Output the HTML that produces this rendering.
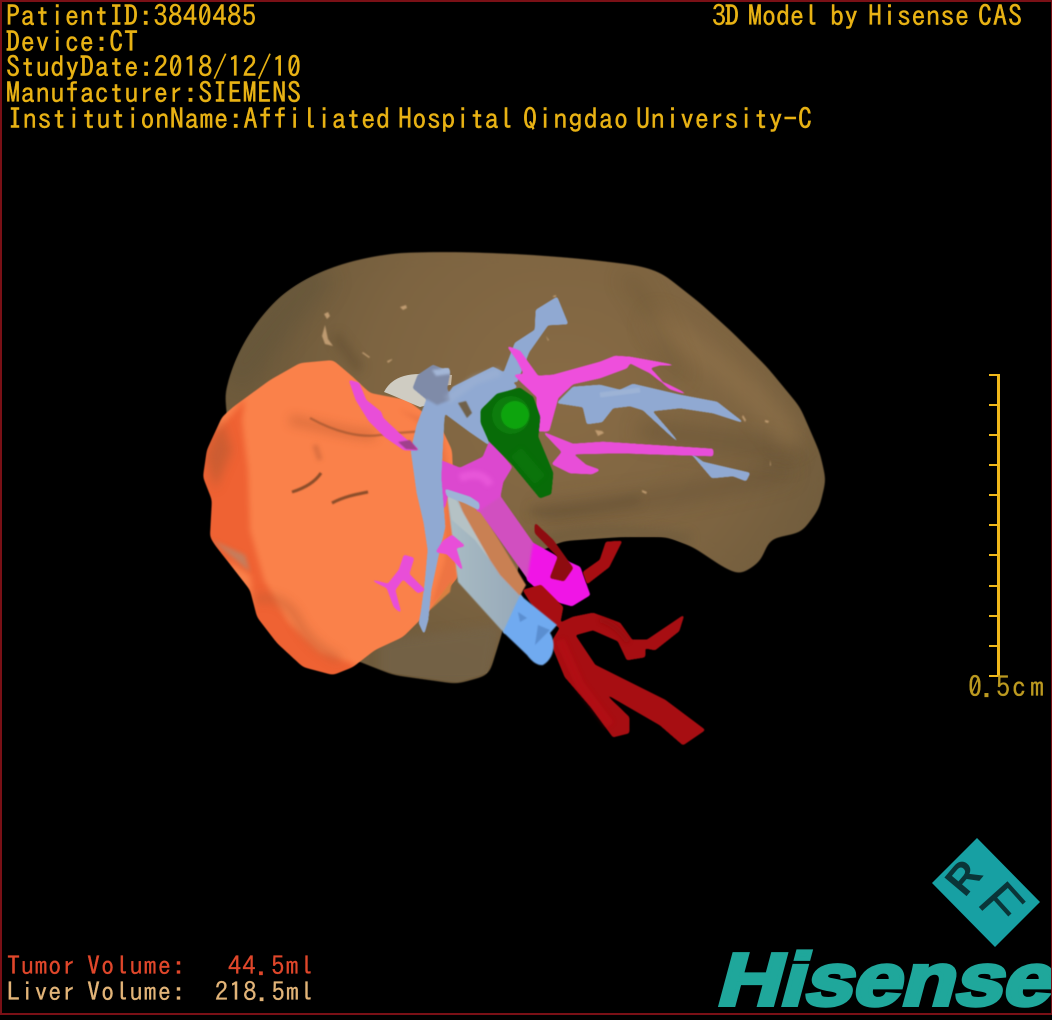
<!DOCTYPE html>
<html><head><meta charset="utf-8"><title>3D Model</title>
<style>
html,body{margin:0;padding:0;background:#000;width:1052px;height:1020px;overflow:hidden}
svg{display:block}
text{font-family:"IPAGothic","Liberation Mono",monospace}
</style></head><body>
<svg width="1052" height="1020" viewBox="0 0 1052 1020" xmlns="http://www.w3.org/2000/svg">
<defs>
<radialGradient id="lv" gradientUnits="userSpaceOnUse" cx="560" cy="400" r="300">
<stop offset="0" stop-color="#886b45"/><stop offset=".65" stop-color="#7d6441"/><stop offset="1" stop-color="#6f5b3c"/>
</radialGradient>
<linearGradient id="tube" x1="0" y1="0" x2="1" y2="0"><stop offset="0" stop-color="#a9bcc4"/><stop offset="1" stop-color="#96a8b8"/></linearGradient>
<filter id="b1" filterUnits="userSpaceOnUse" x="0" y="0" width="1052" height="1020"><feGaussianBlur stdDeviation="0.7"/></filter>
<filter id="b2" filterUnits="userSpaceOnUse" x="0" y="0" width="1052" height="1020"><feGaussianBlur stdDeviation="2"/></filter>
<filter id="b5" filterUnits="userSpaceOnUse" x="0" y="0" width="1052" height="1020"><feGaussianBlur stdDeviation="5"/></filter>
<filter id="b10" filterUnits="userSpaceOnUse" x="0" y="0" width="1052" height="1020"><feGaussianBlur stdDeviation="10"/></filter>
<filter id="goo6" filterUnits="userSpaceOnUse" x="0" y="0" width="1052" height="1020" color-interpolation-filters="sRGB"><feGaussianBlur stdDeviation="6"/><feColorMatrix type="matrix" values="1 0 0 0 0 0 1 0 0 0 0 0 1 0 0 0 0 0 14 -6.5"/><feGaussianBlur stdDeviation="0.6"/></filter>
<filter id="goo3" filterUnits="userSpaceOnUse" x="0" y="0" width="1052" height="1020" color-interpolation-filters="sRGB"><feGaussianBlur stdDeviation="3"/><feColorMatrix type="matrix" values="1 0 0 0 0 0 1 0 0 0 0 0 1 0 0 0 0 0 14 -6.5"/><feGaussianBlur stdDeviation="0.5"/></filter>
<filter id="goo1" filterUnits="userSpaceOnUse" x="0" y="0" width="1052" height="1020" color-interpolation-filters="sRGB"><feGaussianBlur stdDeviation="1.1"/><feColorMatrix type="matrix" values="1 0 0 0 0 0 1 0 0 0 0 0 1 0 0 0 0 0 12 -4"/><feGaussianBlur stdDeviation="0.4"/></filter>
<clipPath id="lc"><path d="M225 395C232 360 250 325 280 297C310 272 350 258 400 253C470 250 560 255 633 265C650 268 660 272 667 277L700 303L733 333L767 367L800 407L820 453L825 480L817 507L800 530L780 535L770 537L760 560L740 572L723 565L693 547L667 537L620 537L563 541L520 560L500 633L487 673L457 682L393 673L330 650L240 560Z"/></clipPath>
<clipPath id="tc"><path d="M333 360L353 377L370 393L407 400L440 425L452 450L455 517L458 577L430 610L403 637L375 650L353 667L333 675L303 667L277 643L257 617L250 590L215 545L210 537L212 500L203 477L207 450L222 417L233 407L270 380L300 363Z"/></clipPath>
</defs>
<rect width="1052" height="1020" fill="#000"/>

<!-- liver -->
<g filter="url(#goo6)">
<path d="M225 395C232 360 250 325 280 297C310 272 350 258 400 253C470 250 560 255 633 265C650 268 660 272 667 277L700 303L733 333L767 367L800 407L820 453L826 480L819 509L802 532L780 537L770 539L760 562L740 575L723 567L693 547L667 537L620 537L563 541L520 560L502 633L489 675L457 684L393 675L330 650L240 560Z" fill="url(#lv)"/>
</g>
<g clip-path="url(#lc)">
 <path d="M540 515C600 505 680 500 790 470" stroke="#5f4c30" stroke-width="14" fill="none" opacity=".5" filter="url(#b10)"/>
 <path d="M640 430L750 445L795 455" stroke="#604d30" stroke-width="18" fill="none" opacity=".5" filter="url(#b10)"/>
 <path d="M650 320C690 340 770 400 795 445" stroke="#94764e" stroke-width="22" fill="none" opacity=".6" filter="url(#b10)"/>
 <path d="M625 275C650 300 660 340 680 380" stroke="#6b5636" stroke-width="14" fill="none" opacity=".45" filter="url(#b10)"/>
 <path d="M230 380L320 270" stroke="#62543a" stroke-width="36" fill="none" opacity=".55" filter="url(#b10)"/>
 <path d="M335 335L360 370" stroke="#5f4b2e" stroke-width="10" fill="none" opacity=".5" filter="url(#b5)"/>
 <path d="M380 640L500 625L490 685L380 685Z" fill="#75644a" opacity=".75" filter="url(#b5)"/>
 <path d="M530 510C560 515 600 505 640 500" stroke="#604e33" stroke-width="7" fill="none" opacity=".55" filter="url(#b5)"/>
 <path d="M530 550C560 528 620 528 690 540" stroke="#6e5c3e" stroke-width="12" fill="none" opacity=".7" filter="url(#b5)"/>
</g>
<!-- flecks -->
<g fill="#c6a176" filter="url(#b1)" opacity=".9">
<path d="M324 314l4-2 2 4-3 3zM325 325l3 14 5 7-8-2-3-8z"/>
<path d="M400 307l6-2 1 3-4 2zM363 352l7 5-1 1-7-5zM387 361l5-2v1l-4 3zM553 296l3-1v2h-3zM546 336l3 4-1 1zM604 433l-6 3-3-6 7 1zM743 415l3 5-1 2-3-5zM770 460l1 5-1 1zM642 490l5 2-1 2-4-2zM765 420l4 1-1 2-3-1z"/>
</g>

<!-- tumor -->
<g filter="url(#goo3)">
<path d="M333 360L353 377L370 393L407 400L440 425L452 450L455 517L458 577L430 610L403 637L375 650L353 667L333 675L303 667L277 643L257 617L250 590L215 545L210 537L212 500L203 477L207 450L222 417L233 407L270 380L300 363Z" fill="#fa814a"/>
<g clip-path="url(#tc)">
 <path d="M245 400L200 450L205 545L250 575L258 625L300 672L335 682L365 668L320 652L288 622L264 580L250 530L248 470L242 420Z" fill="#ef6233"/>
</g>
</g>
<g clip-path="url(#tc)">
 <path d="M205 455L222 420L232 450L215 490Z" fill="#b65a33" opacity=".6" filter="url(#b5)"/>
 <path d="M212 540L245 555L250 572Z" fill="#b98468" opacity=".8" filter="url(#b2)"/>
 <path d="M290 420C320 425 350 435 375 435" stroke="#b8592e" stroke-width="10" fill="none" opacity=".4" filter="url(#b5)"/>
 <path d="M310 418C335 432 360 438 380 435C400 432 420 432 435 430" stroke="#8a4c2a" stroke-width="2.2" fill="none" opacity=".55" filter="url(#b1)"/>
 <path d="M292 492C305 488 315 482 321 473" stroke="#6e3f22" stroke-width="3" fill="none" opacity=".8" filter="url(#b1)"/>
 <path d="M332 503C345 496 358 494 368 492" stroke="#6e3f22" stroke-width="3" fill="none" opacity=".8" filter="url(#b1)"/>
 <path d="M320 460L315 445" stroke="#c46238" stroke-width="5" fill="none" opacity=".6" filter="url(#b2)"/>
 <path d="M255 600C270 595 290 600 300 625C310 640 320 650 340 660" stroke="#bf5b30" stroke-width="7" fill="none" opacity=".6" filter="url(#b5)"/>
 <path d="M400 410L440 425L455 500L458 580L430 608L445 560L445 480L430 430Z" fill="#e87040" opacity=".7" filter="url(#b2)"/>
</g>

<!-- pale disc behind knot -->
<path d="M384 392C390 380 402 374 420 374L447 400L420 407C410 403 395 396 384 392Z" fill="#cfccc2"/>
<path d="M438 374L452 375L451 385L440 386Z" fill="#c5b5a0"/>

<!-- grey tube + orange band -->
<g filter="url(#b1)">
<path d="M447 495L468 500L523 598L505 634L458 582Z" fill="url(#tube)"/>
<path d="M458 500L478 505L526 585L520 596L500 575L470 530Z" fill="#c98052"/>
<path d="M447 495L456 500L490 560L475 540L452 520Z" fill="#b5c2c5"/>
<path d="M452 580L430 610L450 592Z" fill="#d9803f"/>
</g>

<!-- magenta tube and hub -->
<g filter="url(#goo1)">
<path d="M476 506L500 496L533 543L545 585L530 582Z" fill="#d14fc0"/>
<path d="M440 460L460 468L483 457L490 440L512 467L503 482L500 497L478 512L470 497L445 492L437 478Z" fill="#dc48cf"/>
<path d="M440 480L449 490L445 507L438 510Z" fill="#dc48cf"/>
<!-- bright end -->
<path d="M533 543L560 558L580 567L590 595L572 606L550 600L527 580Z" fill="#f015e6"/>
</g>
<path d="M460 478C475 472 485 475 490 485" stroke="#f060e0" stroke-width="8" fill="none" opacity=".6" filter="url(#b2)"/>

<!-- red vessels -->
<g filter="url(#goo1)">
<g fill="#a70e12">
 <path d="M523 590L541 585L563 607L560 623L573 617L593 613L620 623L632 640L647 640L684 615L679 631L655 650L645 648L645 657L627 660L618 641L593 630L575 635L595 665L665 700L705 730L683 745L660 725L603 692L629 717L629 733L613 737L591 707L565 677L551 643L560 628L535 610Z"/>
 <path d="M583 572L600 560L606 542L622 541L609 567L587 584Z"/>
</g>
<path d="M535 523L553 540L573 568L564 581L550 578L558 557L535 533Z" fill="#8e0c10"/>
</g>
<path d="M560 640L580 685L610 725" stroke="#bb1116" stroke-width="9" fill="none" opacity=".5" filter="url(#b2)"/>
<path d="M600 620C610 622 620 630 628 642" stroke="#8f0a0f" stroke-width="5" fill="none" opacity=".6" filter="url(#b2)"/>

<!-- solid blue end -->
<g filter="url(#b1)"><path d="M520 595L557 625L550 633C556 642 555 658 543 665C536 666 530 659 527 655L503 632Z" fill="#70aaf0"/></g>
<path d="M518 612L527 618L520 622ZM538 625L550 630L535 645Z" fill="#4a78b8" opacity=".55" filter="url(#b1)"/>

<!-- blue vessels -->
<g filter="url(#goo1)">
<g fill="#90a9d2">
 <path d="M501 380L515 343L535 330L536 310L557 297L568 324L548 325L529 352L517 382Z"/>
 <path d="M440 407L453 387L493 367L503 372L517 387L497 398L483 407L489 445L470 432L447 415Z"/>
 <path d="M557 403L573 387L600 385L620 390L633 384L680 395L717 402L744 423L713 413L680 408L652 411L683 447L703 462L750 473L746 481L733 476L712 478L695 458L643 410L630 406L613 408L602 422L587 424L583 407Z"/>
 <path d="M428 396L446 405L444 420L441 477L445 527L438 557L431 590L428 620L424 634L419 623L421 613L425 583L428 550L424 523L417 493L411 450L417 425Z"/>
</g>
<path d="M418 375L433 365L450 372L447 388L450 400L437 405L425 398L413 388Z" fill="#7f8ba8"/>
<path d="M432 370L449 368L450 374L436 376Z" fill="#a3b6d6"/>
<path d="M445 489L470 497L479 503L479 510L465 503L447 496Z" fill="#9db4d6"/>
</g>
<path d="M447 400L475 380L500 372" stroke="#a2b5d4" stroke-width="9" fill="none" opacity=".45" filter="url(#b2)"/>
<path d="M600 395L640 390" stroke="#a6bad8" stroke-width="5" fill="none" opacity=".6" filter="url(#b1)"/>
<path d="M458 403l8-2 6 12-5 5z" fill="#6f6048" filter="url(#b1)"/>

<!-- magenta branches -->
<g filter="url(#goo1)">
<g fill="#e84ed8">
 <path d="M507 346L520 351L530 365L538 376L553 375L600 362L615 356L630 357L680 366L660 365L650 368L663 382L691 396L670 389L650 373L630 363L627 368L600 378L573 384L558 398L549 431L537 431L537 397L514 375L524 374L517 360Z" fill="#ee4fdc"/>
 <path d="M543 432L573 444L603 442L713 449L713 456L620 453L573 454L586 465L600 470L592 474L570 473L552 464L562 452Z"/>
 <path d="M349 380L359 383L366 400L381 412L383 418L401 435L419 450L404 450L385 437L369 421L356 400Z"/>
 <path d="M443 541L452 535L465 546L456 548L463 571L454 561L447 554L436 552Z"/>
 <path d="M404 555L414 558L409 574L425 590L418 593L403 579L395 590L401 613L394 607L387 588L369 579L388 584L399 570Z"/>
</g>
</g>
<path d="M398 442l12-2 8 10-12-1z" fill="#a0408c" filter="url(#b1)"/>

<!-- green -->
<g filter="url(#goo1)"><path d="M481 410L497 394L520 388L533 397L540 417L538 437L553 473L551 494L540 498L526 481L512 464L489 441L481 423Z" fill="#086c08"/></g>
<circle cx="511" cy="415" r="19" fill="#0a7c0a" filter="url(#b1)"/>
<circle cx="515" cy="415" r="14" fill="#0ea40e" filter="url(#b1)"/>
<path d="M516 452L540 480" stroke="#0c7a0c" stroke-width="14" fill="none" opacity=".6" filter="url(#b2)"/>

<!-- scale -->
<g fill="#f0b81a">
 <rect x="997" y="374" width="3" height="303"/>
 <rect x="989" y="374" width="10" height="2"/><rect x="989" y="404" width="10" height="2"/>
 <rect x="989" y="434" width="10" height="2"/><rect x="989" y="464" width="10" height="2"/>
 <rect x="989" y="494" width="10" height="2"/><rect x="989" y="524" width="10" height="2"/>
 <rect x="989" y="554" width="10" height="2"/><rect x="989" y="585" width="10" height="2"/>
 <rect x="989" y="615" width="10" height="2"/><rect x="989" y="645" width="10" height="2"/>
 <rect x="989" y="675" width="10" height="2"/>
</g>

<!-- text -->
<g fill="#e8b214" stroke="#e8b214" stroke-width=".4" font-size="28">
 <text x="6" y="26" textLength="250">PatientID:3840485</text>
 <text x="6" y="52" textLength="132">Device:CT</text>
 <text x="6" y="77" textLength="295">StudyDate:2018/12/10</text>
 <text x="6" y="103" textLength="295">Manufacturer:SIEMENS</text>
 <text x="8" y="129" textLength="382">InstitutionName:Affiliated</text>
 <text x="398" y="129" textLength="115">Hospital</text>
 <text x="523" y="129" textLength="105">Qingdao</text>
 <text x="636" y="129" textLength="176">University-C</text>
 <text x="712" y="26" textLength="27">3D</text>
 <text x="748" y="26" textLength="70">Model</text>
 <text x="830" y="26" textLength="28">by</text>
 <text x="868" y="26" textLength="101">Hisense</text>
 <text x="978" y="26" textLength="44">CAS</text>
</g>
<g fill="#bc9a20" stroke="#bc9a20" stroke-width=".3" font-size="28">
 <text x="968" y="697" textLength="42">0.5</text>
 <text x="1012" y="697" textLength="32">cm</text>
</g>
<g font-size="26" stroke-width=".3">
 <g fill="#e0472b" stroke="#e0472b">
  <text x="7" y="975" textLength="68">Tumor</text>
  <text x="87" y="975" textLength="98">Volume:</text>
  <text x="228" y="975" textLength="85">44.5ml</text>
 </g>
 <g fill="#e2b478" stroke="#e2b478">
  <text x="7" y="1001" textLength="68">Liver</text>
  <text x="87" y="1001" textLength="98">Volume:</text>
  <text x="215" y="1001" textLength="98">218.5ml</text>
 </g>
</g>

<!-- RF logo -->
<path d="M977 838L1040 902L995 947L932 883Z" fill="#17a0a3"/>
<text transform="translate(963 877) rotate(-50)" y="15" text-anchor="middle" font-size="42" font-weight="700" style="font-family:'Liberation Sans',sans-serif" fill="#0a3538">R</text>
<text transform="translate(1002 903) rotate(48)" y="20" text-anchor="middle" font-size="56" style="font-family:'Liberation Sans',sans-serif" fill="#0a3538">F</text>

<!-- Hisense -->
<text transform="translate(715 1005) skewX(-15)" x="0" y="0" font-size="74" font-weight="700" textLength="334" lengthAdjust="spacingAndGlyphs" fill="#1fa79b" stroke="#1fa79b" stroke-width="4" style="font-family:'Liberation Sans',sans-serif">Hisense</text>

<!-- frame -->
<rect x="0" y="0" width="1052" height="2" fill="#7a1016"/>
<rect x="0" y="0" width="2" height="1015" fill="#7a1016"/>
<rect x="1051" y="0" width="1" height="1015" fill="#7a1016"/>
<rect x="0" y="1013" width="1052" height="2" fill="#7a1016"/>
</svg>
</body></html>
